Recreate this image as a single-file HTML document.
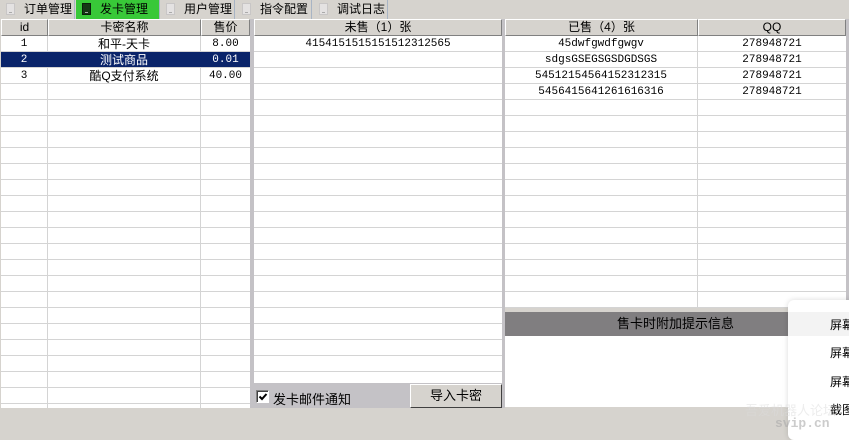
<!DOCTYPE html><html><head><meta charset="utf-8"><style>
*{margin:0;padding:0;box-sizing:border-box}
body{width:849px;height:435px;background:#d6d3ce;position:relative;overflow:hidden;font:12px "Liberation Mono","Noto Sans CJK SC",sans-serif;color:#000}
.a{position:absolute}
.tab{position:absolute;top:0;height:19px;line-height:19px;font-family:"Liberation Sans","Noto Sans CJK SC",sans-serif;font-size:12px;padding-left:24px;border-right:1px solid #a8b4c4;white-space:nowrap;overflow:hidden}
.tab i{position:absolute;left:6px;top:3px;width:9px;height:12px;background:#e4e2e2;border:1px solid #c8c6c6}
.tab i:after{content:"";position:absolute;left:2px;top:8px;width:3px;height:1px;background:#aaa}
.grid{position:absolute;background:#fff;background-image:repeating-linear-gradient(to bottom,transparent 0 15px,#d4d4d4 15px 16px)}
.hd{position:absolute;top:19px;height:17px;background:#d6d3ce;border:1px solid;border-color:#fff #808080 #808080 #fff;text-align:center;line-height:15px;font-family:"Liberation Sans","Noto Sans CJK SC",sans-serif;font-size:12px}
.vl{position:absolute;width:1px;background:#d4d4d4}
.c{position:absolute;height:16px;line-height:17px;text-align:center;font-size:11px;white-space:nowrap}
.cj{font-family:"Liberation Sans","Noto Sans CJK SC",sans-serif;font-size:12px}
</style></head><body>
<div class="tab" style="left:0;width:75px"><i></i>订单管理</div>
<div class="tab" style="left:76px;width:84px;background:#38c838"><i style="background:#163816;border-color:#0a200a"></i>发卡管理</div>
<div class="tab" style="left:160px;width:75px"><i></i>用户管理</div>
<div class="tab" style="left:236px;width:76px"><i></i>指令配置</div>
<div class="tab" style="left:313px;width:75px"><i></i>调试日志</div>

<div class="grid" style="left:1px;top:36px;width:249px;height:372px"></div>
<div class="vl" style="left:47px;top:36px;height:372px"></div>
<div class="vl" style="left:200px;top:36px;height:372px"></div>
<div class="hd" style="left:1px;width:47px">id</div>
<div class="hd" style="left:48px;width:153px">卡密名称</div>
<div class="hd" style="left:201px;width:49px">售价</div>
<div class="a" style="left:1px;top:52px;width:249px;height:15px;background:#0a246a"></div>
<div class="c" style="left:1px;top:36px;width:46px">1</div>
<div class="c cj" style="left:48px;top:36px;width:152px">和平-天卡</div>
<div class="c" style="left:201px;top:36px;width:49px">8.00</div>
<div class="c" style="left:1px;top:52px;width:46px;color:#fff">2</div>
<div class="c cj" style="left:48px;top:52px;width:152px;color:#fff">测试商品</div>
<div class="c" style="left:201px;top:52px;width:49px;color:#fff">0.01</div>
<div class="c" style="left:1px;top:68px;width:46px">3</div>
<div class="c cj" style="left:48px;top:68px;width:152px">酷Q支付系统</div>
<div class="c" style="left:201px;top:68px;width:49px">40.00</div>
<div class="a" style="left:250px;top:19px;width:4px;height:389px;background:#c4c2c6"></div>

<div class="grid" style="left:254px;top:36px;width:248px;height:347px"></div>
<div class="hd" style="left:254px;width:248px">未售（1）张</div>
<div class="c" style="left:254px;top:36px;width:248px">4154151515151512312565</div>
<div class="a" style="left:254px;top:383px;width:248px;height:25px;background:#c4c2c6"></div>
<div class="a" style="left:256px;top:390px;width:13px;height:13px;background:#fff;border:1px solid;border-color:#808080 #fff #fff #808080;box-shadow:inset 1px 1px 0 #404040"></div>
<svg class="a" style="left:258px;top:392px" width="10" height="10"><path d="M1.5 4.5 L4 7 L8.5 2" stroke="#000" stroke-width="2" fill="none"/></svg>
<div class="a cj" style="left:273px;top:389px;font-size:13px">发卡邮件通知</div>
<div class="a cj" style="left:410px;top:384px;width:92px;height:24px;background:#d6d3ce;border:1px solid;border-color:#fff #404040 #404040 #fff;text-align:center;line-height:21px;font-size:13px">导入卡密</div>
<div class="a" style="left:502px;top:19px;width:3px;height:389px;background:#c4c2c6"></div>

<div class="grid" style="left:505px;top:36px;width:341px;height:272px"></div>
<div class="vl" style="left:697px;top:36px;height:272px"></div>
<div class="hd" style="left:505px;width:193px">已售（4）张</div>
<div class="hd" style="left:698px;width:148px">QQ</div>
<div class="c" style="left:505px;top:36px;width:192px">45dwfgwdfgwgv</div>
<div class="c" style="left:505px;top:52px;width:192px">sdgsGSEGSGSDGDSGS</div>
<div class="c" style="left:505px;top:68px;width:192px">54512154564152312315</div>
<div class="c" style="left:505px;top:84px;width:192px">5456415641261616316</div>
<div class="c" style="left:698px;top:36px;width:148px">278948721</div>
<div class="c" style="left:698px;top:52px;width:148px">278948721</div>
<div class="c" style="left:698px;top:68px;width:148px">278948721</div>
<div class="c" style="left:698px;top:84px;width:148px">278948721</div>
<div class="a" style="left:505px;top:308px;width:341px;height:4px;background:#d6d3ce"></div>
<div class="a cj" style="left:505px;top:312px;width:341px;height:24px;background:#807e80;text-align:center;line-height:24px;font-size:13px">售卡时附加提示信息</div>
<div class="a" style="left:505px;top:336px;width:341px;height:71px;background:#fff"></div>
<div class="a" style="left:846px;top:19px;width:3px;height:389px;background:#c4c2c6"></div>

<div class="a cj" style="left:788px;top:300px;width:70px;height:140px;background:#fff;border-radius:6px;box-shadow:0 0 6px rgba(0,0,0,.15);font-size:12px">
<div style="position:absolute;left:0;top:12px;width:70px;height:24px;background:#f3f3f3"></div>
<div style="position:absolute;left:42px;top:16px">屏幕</div>
<div style="position:absolute;left:42px;top:44px">屏幕</div>
<div style="position:absolute;left:42px;top:73px">屏幕</div>
<div style="position:absolute;left:42px;top:101px">截图</div>
</div>
<div class="a cj" style="left:745px;top:400px;font-size:13px;color:rgba(220,220,220,.5)">吾爱机器人论坛</div>
<div class="a" style="left:775px;top:416px;font-size:13px;color:rgba(170,170,170,.6);font-weight:bold">svip.cn</div>
</body></html>
